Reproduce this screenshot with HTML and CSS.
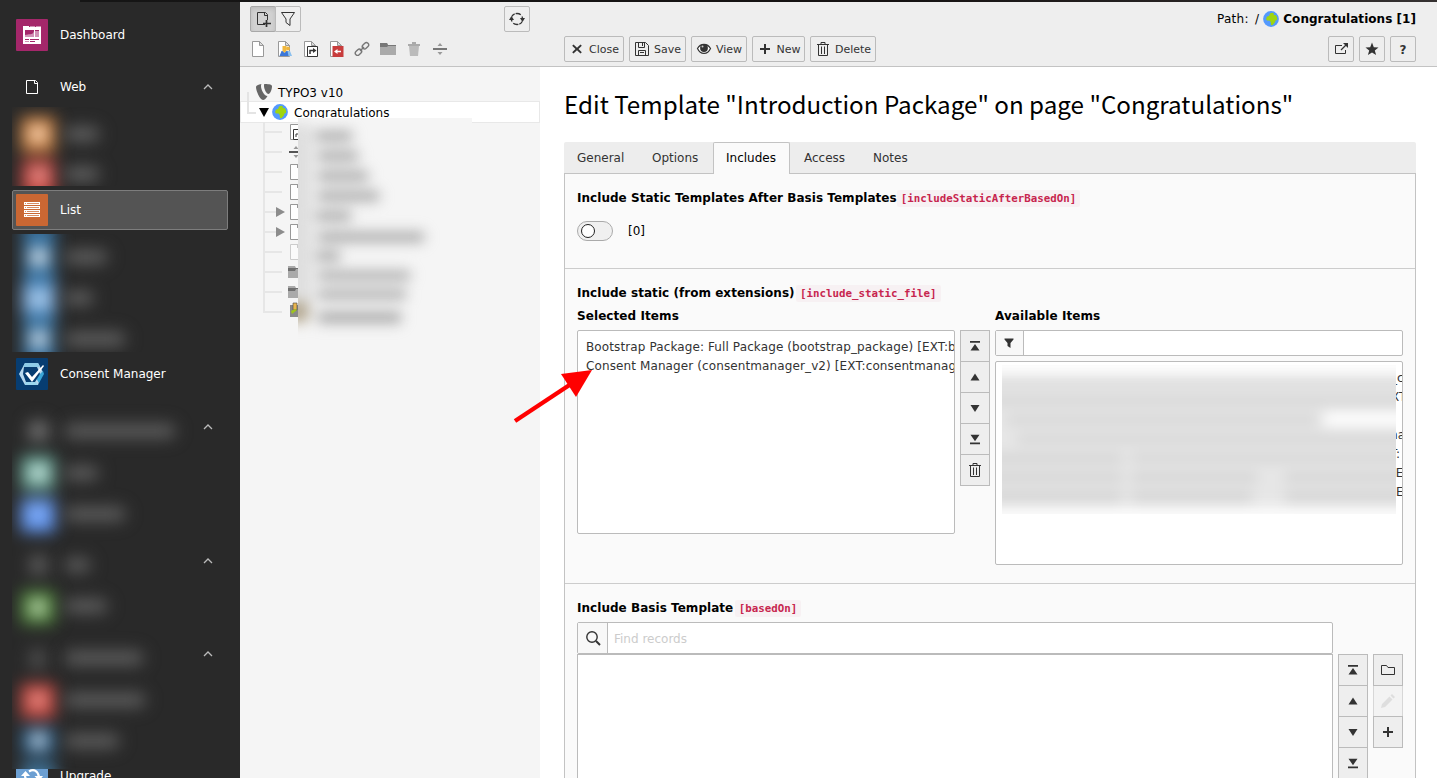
FILE: index.html
```html
<!DOCTYPE html>
<html lang="en">
<head>
<meta charset="utf-8">
<title>Edit Template - TYPO3</title>
<link rel="stylesheet" href="styles.css">
</head>
<body>
<svg class="defs" width="0" height="0">
  <defs>
    <filter id="soft" filterUnits="userSpaceOnUse" x="-40" y="60" width="320" height="760" color-interpolation-filters="sRGB"><feGaussianBlur stdDeviation="7"/></filter>
    <filter id="haze" filterUnits="userSpaceOnUse" x="-60" y="-60" width="560" height="560" color-interpolation-filters="sRGB"><feGaussianBlur stdDeviation="6"/></filter>
    <symbol id="page" viewBox="0 0 16 16"><path d="M2.500.5h7l4 4v11h-11z" fill="#fff" stroke="#999"/><path d="M9.500.5v4h4z" fill="#ddd" stroke="#999"/></symbol>
    <symbol id="globe" viewBox="0 0 16 16"><circle cx="8" cy="8" r="7.900" fill="#5499fd"/><path d="M7 2.500C8.500 1.500 10 1.500 11 2.500l-.5 1.500 2 0c1.500 1.500 2 3 1.500 5l-1.500.5-.7 2-2.300 2.800L8 14l-.3-3-1.200-1.500-2.500 0L3 8l1-2.500 2-.5z" fill="#9fd510"/></symbol>
    <symbol id="bin" viewBox="0 0 16 16"><path d="M3.500 3.500v11h9v-11M2 3.500h12M6 3V1.500h4V3M6.500 5.500V13M9.500 5.500V13" fill="none" stroke="#333"/></symbol>
    <symbol id="first" viewBox="0 0 16 16"><path d="M3 3h10v1.800H3zM8 6l4.500 6.500h-9z" fill="#333"/></symbol>
    <symbol id="up" viewBox="0 0 16 16"><path d="M8 4.500l4.500 7h-9z" fill="#333"/></symbol>
    <symbol id="down" viewBox="0 0 16 16"><path d="M8 12l4.500-7h-9z" fill="#333"/></symbol>
    <symbol id="last" viewBox="0 0 16 16"><path d="M3 11.400h10v1.800H3zM8 10.200L12.500 3.700h-9z" fill="#333"/></symbol>
    <symbol id="plus" viewBox="0 0 16 16"><path d="M7 3h2v4h4v2H9v4H7V9H3V7h4z" fill="#333"/></symbol>
    <symbol id="folder" viewBox="0 0 16 16"><path d="M0 2h7l1 2h8v10H0z" fill="#aaa"/><path d="M0 2h7l1 2h8v1H8L7 6H0z" fill="#777"/></symbol>
    <symbol id="chevron" viewBox="0 0 10 10"><path d="M1 7l4-4 4 4" fill="none" stroke="#bbb" stroke-width="1.300"/></symbol>
  </defs>
</svg>
<div class="topline"></div>
<div class="app">
  <nav class="modules">
    <div class="mod">
      <svg class="mod-icon" viewBox="0 0 32 32"><rect width="32" height="32" rx="1" fill="#a4276a"/><path d="M7 7h6v1h12v17H7z" fill="#fff"/><path d="M14 7h5v1h-5zM20 7h5v1h-5z" fill="#d092b5"/><path d="M9 11h9v7H9z" fill="#d092b5"/><path d="M9 11h9v1c-1 4-4 3-6 3.500L9 16z" fill="#a4276a"/><path d="M19 11h4v7h-4z" fill="#d092b5"/><path d="M19 11h4v1h-4zM9 20h4v1H9zM14 20h9v1h-9zM14 22h5v1h-5z" fill="#a4276a"/><path d="M9 22h4v1H9z" fill="#d092b5"/></svg>
      <span>Dashboard</span>
    </div>
    <div class="mod group">
      <svg class="mod-icon" viewBox="0 0 32 32"><path d="M10.500 9.500h9l2 2v11h-11zM18.500 9.500v3h3" fill="none" stroke="#fff"/></svg>
      <span>Web</span><svg class="chev"><use href="#chevron"/></svg>
    </div>
    <svg class="obscured" width="228" height="79" viewBox="12 107 228 79">
      <g class="soft"><rect x="21" y="117" width="34" height="35" fill="#d6853f"/><rect x="30" y="126" width="16" height="16" fill="#f7dfcb"/><rect x="22" y="160" width="33" height="38" fill="#d04640"/><rect x="31" y="168" width="16" height="15" fill="#e3a09c"/></g>
      <g class="soft" fill="#6c6c6c"><rect x="66" y="128" width="32" height="12"/><rect x="66" y="168" width="32" height="12"/></g>
    </svg>
    <div class="mod active">
      <svg class="mod-icon" viewBox="0 0 32 32"><rect width="32" height="32" rx="1" fill="#ca6733"/><path d="M8 8h16v3H8zM8 12h16v3H8zM8 16h16v3H8zM8 20h16v3H8z" fill="#fff"/><path d="M9 9h1v1H9zM11 9h12v1H11zM9 13h1v1H9zM11 13h12v1H11zM9 17h1v1H9zM11 17h12v1H11zM9 21h1v1H9zM11 21h12v1H11z" fill="#ca6733" opacity=".75"/></svg>
      <span>List</span>
    </div>
    <svg class="obscured" width="228" height="118" viewBox="12 234 228 118">
      <g class="soft"><rect x="23" y="220" width="32" height="152" fill="#37719f"/><rect x="31" y="249" width="16" height="16" fill="#f4f6f8"/><rect x="22" y="284" width="34" height="29" fill="#75a8dc"/><rect x="31" y="292" width="16" height="14" fill="#b9d6ef"/><rect x="31" y="331" width="16" height="16" fill="#e6ecf2"/></g>
      <g class="soft" fill="#6a6a6a"><rect x="66" y="251" width="40" height="12"/><rect x="66" y="292" width="26" height="12"/><rect x="66" y="333" width="58" height="12"/></g>
    </svg>
    <div class="mod consent">
      <svg class="mod-icon" viewBox="0 0 32 32"><rect width="32" height="32" rx="1" fill="#073d71"/><path d="M9 5h13l5 9-5 13H9L3 16z" fill="#b9d9ee"/><path d="M9 5h13l2 4H7z" fill="#8dcbe7"/><path d="M27 13l1 3-5 9-3-5z" fill="#3aa5d7"/><path d="M8 9h13l3 7-5 8h-9l-3-8z" fill="#073d71"/><path d="M9 24h11l2 3H9z" fill="#9bd6ee"/><path d="M9 15l3-1 4 5L27 7l1 1-12 16z" fill="#fff"/></svg>
      <span>Consent Manager</span>
    </div>
    <div class="obscured-group">
      <svg class="obscured" width="228" height="375" viewBox="12 394 228 375">
        <g class="soft"><rect x="29" y="422" width="19" height="18" fill="#777"/><rect x="21" y="456" width="34" height="34" fill="#63a393"/><rect x="30" y="465" width="17" height="16" fill="#d5eae6"/><rect x="21" y="499" width="34" height="33" fill="#6199f8"/><rect x="30" y="506" width="15" height="15" fill="#8cb2f5"/><rect x="30" y="556" width="17" height="18" fill="#606060"/><rect x="21" y="591" width="34" height="33" fill="#4f883a"/><rect x="31" y="600" width="14" height="15" fill="#d5e0cc"/><rect x="30" y="650" width="15" height="18" fill="#545454"/><rect x="21" y="684" width="34" height="34" fill="#d04a42"/><rect x="31" y="693" width="14" height="14" fill="#e6a39d"/><rect x="22" y="727" width="33" height="28" fill="#275e8b"/><rect x="31" y="733" width="15" height="15" fill="#d5dee6"/><rect x="22" y="763" width="33" height="30" fill="#41789f"/></g>
        <g class="soft" fill="#686868"><rect x="66" y="425" width="108" height="12"/><rect x="66" y="467" width="31" height="12"/><rect x="66" y="508" width="58" height="12"/><rect x="66" y="559" width="23" height="12"/><rect x="66" y="600" width="40" height="12"/><rect x="66" y="652" width="76" height="12"/><rect x="66" y="694" width="78" height="12"/><rect x="66" y="735" width="52" height="12"/></g>
      </svg>
      <div class="chevs"><svg class="chev"><use href="#chevron"/></svg><svg class="chev"><use href="#chevron"/></svg><svg class="chev"><use href="#chevron"/></svg></div>
    </div>
    <div class="mod upgrade">
      <svg class="mod-icon" viewBox="0 13 32 32"><rect y="13" width="32" height="32" fill="#6c9fd2"/><path d="M13 15.500c5-3 9-.5 10 5.500M9 19c0 6 5 9 10 7" fill="none" stroke="#fff" stroke-width="2.200"/><path d="M9.500 15l4.500 5H5zM23 25l-4.500-5H27z" fill="#fff"/></svg>
      <span>Upgrade</span>
    </div>
  </nav>

  <aside class="tree-pane">
    <div class="tree-head">
      <div class="tree-tools">
        <div class="seg"><button class="btn sq on"><svg viewBox="0 0 16 16"><path d="M10 13.500H2.500v-12h8l2 2V9M9.500 1.500v3h3" fill="none" stroke="#333"/><path d="M11.500 9v7M8 12.500h8" stroke="#333" stroke-width="1.700"/></svg></button><button class="btn sq"><svg viewBox="0 0 16 16"><path d="M1.500 1.500h13L10 8v6.500l-4-3V8z" fill="none" stroke="#333"/></svg></button></div>
        <button class="btn sq"><svg viewBox="0 0 16 16"><path d="M3 10.500C1 6 4 2.500 8 2.500M13 5.500c2 4.500-1 8-5 8M8 2.500c2 0 3.500.8 4.500 2M8 13.500c-2 0-3.500-.8-4.500-2" fill="none" stroke="#333" stroke-width="1.300" stroke-dasharray="4 1"/><path d="M2.500 5L5 9H0zM13.500 11L16 7h-5z" fill="#333"/></svg></button>
      </div>
      <div class="newicons">
        <svg><use href="#page"/></svg>
        <svg viewBox="0 0 16 16"><use href="#page"/><circle cx="12" cy="7.500" r="2" fill="#edb43d"/><path d="M9 15l1-5h4l2 5z" fill="#8bc0ee"/><path d="M6.500 5h4v5l-2 2-2-2z" fill="#f0b83f"/><path d="M3.500 15l2-5h1l2 2 2-2h1l1 5z" fill="#3c78d8"/></svg>
        <svg viewBox="0 0 16 16"><use href="#page"/><path d="M5.500 5.500h10v10h-10z" fill="#fff" stroke="#333"/><path d="M8 13v-3.500h3.500" fill="none" stroke="#333" stroke-width="1.500"/><path d="M11 7l3.500 2.500L11 12z" fill="#333"/></svg>
        <svg viewBox="0 0 16 16"><use href="#page"/><path d="M4.500 5h11v11h-11z" fill="#c83c3c"/><path d="M6 10.500L9.500 8v1.800H13v1.500H9.500V13z" fill="#fff"/></svg>
        <svg viewBox="0 0 16 16"><g fill="none" stroke="#777" stroke-width="1.400"><rect x="8" y="2.500" width="7" height="4.500" rx="2.200" transform="rotate(-45 11.500 4.800)"/><rect x="1" y="9" width="7" height="4.500" rx="2.200" transform="rotate(-45 4.500 11.300)"/><path d="M6 10l4-4"/></g></svg>
        <svg><use href="#folder"/></svg>
        <svg viewBox="0 0 16 16"><path d="M3 5h10l-1 10H4z" fill="#bbb"/><path d="M2 3h12v2H2zM6 1h4v2H6z" fill="#aaa"/></svg>
        <svg viewBox="0 0 16 16"><path d="M1 7h14v2H1z" fill="#777"/><path d="M8 2l2.500 3h-5zM8 14l2.500-3h-5z" fill="#999"/></svg>
      </div>
    </div>
    <div class="tree">
      <div class="node"><svg class="root-rail" width="16" height="20"><path d="M8 10v10" stroke="#e4e4e4" stroke-width="2"/></svg><svg class="ic" viewBox="0 0 16 16"><path d="M5.500 0C2 .5 0 1.500 0 3c0 4 4 13 7 13 1.500 0 3-1.500 4.500-4C8 12 5 5.500 5 2c0-1 .2-1.500.5-2zM8.500 0C11 0 16 .3 16 2c0 4-2 8-3.500 8C10.500 10 8 5 8 2c0-1.300 0-1.800.5-2z" fill="#666"/></svg><span>TYPO3 v10</span></div>
      <div class="node current"><svg class="rail" width="32" height="20"><path d="M8 0v11h8" fill="none" stroke="#e4e4e4" stroke-width="2"/><path d="M19 6h10l-5 9z"/></svg><svg class="ic"><use href="#globe"/></svg><span>Congratulations</span></div>
      <div class="children">
        <div class="kids">
          <svg width="58" height="20"><path d="M24 0v20M24 10h18" class="rl"/><path d="M50.500 2.500h9v15h-9z" fill="#fff" stroke="#999"/><path d="M53.500 7.500h8v10h-8zM56 15v-3h4" fill="#fff" stroke="#333"/></svg>
          <svg width="58" height="20"><path d="M24 0v20M24 10h18" class="rl"/><path d="M49 9h14v2H49z" fill="#555"/><path d="M56 4l2.500 3h-5zM56 16l2.500-3h-5z" fill="#999"/></svg>
          <svg width="58" height="20"><path d="M24 0v20M24 10h18" class="rl"/><path d="M58 17.500h-7.500v-15H58M57.500 2v4" fill="#fff" stroke="#999"/></svg>
          <svg width="58" height="20"><path d="M24 0v20M24 10h18" class="rl"/><path d="M58 17.500h-7.500v-15H58M57.500 2v4" fill="#fff" stroke="#999"/></svg>
          <svg width="58" height="20"><path d="M24 0v20M24 10h18" class="rl"/><path d="M36 5l9 5-9 5z" fill="#8c8c8c"/><path d="M58 17.500h-7.500v-15H58M57.500 2v4" fill="#fff" stroke="#999"/></svg>
          <svg width="58" height="20"><path d="M24 0v20M24 10h18" class="rl"/><path d="M36 5l9 5-9 5z" fill="#8c8c8c"/><path d="M58 17.500h-7.500v-15H58M57.500 2v4" fill="#fff" stroke="#999"/></svg>
          <svg width="58" height="20"><path d="M24 0v20M24 10h18" class="rl"/><path d="M58 17.500h-7.500v-15H58M57.500 2v4" fill="#fafafa" stroke="#ccc"/></svg>
          <svg width="58" height="20"><path d="M24 0v20M24 10h18" class="rl"/><path d="M48 4h7l1 2h2v10H48z" fill="#aaa"/><path d="M48 6h10v1h-2l-1 2h-7z" fill="#707070"/></svg>
          <svg width="58" height="20"><path d="M24 0v20M24 10h18" class="rl"/><path d="M48 4h7l1 2h2v10H48z" fill="#aaa"/><path d="M48 6h10v1h-2l-1 2h-7z" fill="#707070"/></svg>
          <svg width="58" height="20"><path d="M24 0v10h18" class="rl" fill="none"/><path d="M50 3h8v12h-8z" fill="#8a8a8a"/><path d="M53 1h4v7h-4z" fill="#e9b54d" stroke="#444" stroke-width=".6"/><path d="M51 9l4-2 2 1-5 4z" fill="#9fc51a"/></svg>
        </div>
        <svg class="tree-haze" width="174" height="237" viewBox="0 0 174 237">
          <rect width="174" height="237" fill="#f5f5f5"/>
          <g class="haze"><rect x="-20" y="6" width="34" height="192" fill="#dedede"/><rect x="-12" y="184" width="22" height="20" fill="#b3a78f"/>
          <g fill="#a6a6a6"><rect x="18" y="13" width="36" height="10"/><rect x="20" y="33" width="40" height="10"/><rect x="20" y="53" width="50" height="10"/><rect x="20" y="73" width="61" height="10"/><rect x="18" y="93" width="35" height="10"/><rect x="20" y="114" width="106" height="10"/><rect x="18" y="133" width="24" height="10"/><rect x="20" y="153" width="92" height="9"/><rect x="20" y="172" width="88" height="9"/><rect x="20" y="194" width="83" height="11"/></g></g>
        </svg>
      </div>
    </div>
  </aside>

  <main class="content">
    <header class="dochead">
      <div class="path"><span class="crumb">Path: /</span><svg class="ic"><use href="#globe"/></svg><b>Congratulations [1]</b></div>
      <div class="toolbar">
        <button class="btn w60"><svg viewBox="0 0 16 16"><path d="M4.500 3.500L8 6.700l3.500-3.200 1.300 1.300L9.500 8l3.300 3.200-1.300 1.300L8 9.300l-3.500 3.200-1.300-1.300L6.500 8 3.200 4.800z" fill="#333"/></svg>Close</button>
        <button class="btn w57"><svg viewBox="0 0 16 16"><path d="M1.500 1.500h10l3 3v10h-13zM4.500 1.500v5h6v-5M4.500 14.500v-5h7v5" fill="none" stroke="#333"/><path d="M6 11.500h4M8.500 2v3" stroke="#333"/></svg>Save</button>
        <button class="btn w56"><svg viewBox="0 0 16 16"><path d="M1.500 7.500c3-5.500 10-5.500 13 0-3 6.500-10 6.500-13 0z" fill="#fff" stroke="#333" stroke-width="1.200"/><circle cx="8" cy="7" r="3.900" fill="#333"/><circle cx="6.500" cy="5.500" r="1" fill="#ccc"/></svg>View</button>
        <button class="btn w53"><svg><use href="#plus"/></svg>New</button>
        <button class="btn w66"><svg><use href="#bin"/></svg>Delete</button>
        <span class="grow"></span>
        <button class="btn sq"><svg viewBox="0 0 16 16"><path d="M9 4.500H2.500v8h10V9" fill="none" stroke="#333"/><path d="M8 9l5-5" stroke="#333" stroke-width="1.300"/><path d="M10 2h5v5z" fill="#333"/></svg></button>
        <button class="btn sq"><svg viewBox="0 0 16 16"><path d="M8 1.500l1.800 4.700 4.700.2-3.700 3 1.300 4.600L8 11.400 3.900 14l1.300-4.600-3.700-3 4.700-.2z" fill="#333"/></svg></button>
        <button class="btn sq q">?</button>
      </div>
    </header>
    <div class="body">
      <h1>Edit Template "Introduction Package" on page "Congratulations"</h1>
      <div class="tabs"><span class="tab t1">General</span><span class="tab t2">Options</span><span class="tab sel">Includes</span><span class="tab t4">Access</span><span class="tab t5">Notes</span></div>
      <div class="panel">
        <section class="s1">
          <div class="label">Include Static Templates After Basis Templates<code>[includeStaticAfterBasedOn]</code></div>
          <div class="switch-row"><span class="switch"><i></i></span><span>[0]</span></div>
        </section>
        <section class="s2">
          <div class="label">Include static (from extensions)<code>[include_static_file]</code></div>
          <div class="pick">
            <div class="selected">
              <div class="sub">Selected Items</div>
              <div class="list"><div>Bootstrap Package: Full Package (bootstrap_package) [EXT:b</div><div>Consent Manager (consentmanager_v2) [EXT:consentmanag</div></div>
            </div>
            <div class="vbtns">
              <button class="btn"><svg><use href="#first"/></svg></button><button class="btn"><svg><use href="#up"/></svg></button><button class="btn"><svg><use href="#down"/></svg></button><button class="btn"><svg><use href="#last"/></svg></button><button class="btn"><svg><use href="#bin"/></svg></button>
            </div>
            <div class="available">
              <div class="sub">Available Items</div>
              <div class="filter"><span class="addon"><svg viewBox="0 0 16 16"><path d="M3.500 3.500h9v1L9.500 8v5l-3-2V8l-3-3.500z" fill="#333"/></svg></span><span class="field"></span></div>
              <div class="list avail">
                <svg class="avail-haze" width="394" height="149" viewBox="0 0 394 149">
                  <rect width="394" height="149" fill="#fdfdfd"/>
                  <g class="haze"><rect x="-30" y="12" width="460" height="130" fill="#e6e6e6"/><rect x="322" y="47" width="110" height="14" fill="#fff"/><g fill="#cdcdcd"><rect x="-10" y="14" width="440" height="5"/><rect x="-10" y="33" width="440" height="6"/><rect x="5" y="52" width="310" height="6"/><rect x="15" y="71" width="410" height="6"/><rect x="-10" y="90" width="130" height="7"/><rect x="130" y="90" width="300" height="6"/><rect x="-10" y="109" width="130" height="7"/><rect x="130" y="109" width="125" height="7"/><rect x="283" y="109" width="150" height="7"/><rect x="-10" y="128" width="130" height="8"/><rect x="130" y="128" width="120" height="8"/><rect x="283" y="128" width="150" height="8"/></g></g>
                </svg>
                <div class="tails"><span class="c1">_c</span><span class="c2">XT</span><span></span><span class="c3">ma</span><span class="c4">T:</span><span class="c5">[E</span><span>E</span></div>
              </div>
            </div>
          </div>
        </section>
        <section class="s3">
          <div class="label">Include Basis Template<code>[basedOn]</code></div>
          <div class="search"><span class="addon"><svg viewBox="0 0 16 16"><circle cx="7" cy="7" r="5.200" fill="none" stroke="#333" stroke-width="1.400"/><path d="M11 11l4 4" stroke="#333" stroke-width="2"/></svg></span><span class="field">Find records</span></div>
          <div class="records">
            <div class="list big"></div>
            <div class="vbtns"><button class="btn"><svg><use href="#first"/></svg></button><button class="btn"><svg><use href="#up"/></svg></button><button class="btn"><svg><use href="#down"/></svg></button><button class="btn"><svg><use href="#last"/></svg></button></div>
            <div class="vbtns"><button class="btn"><svg viewBox="0 0 16 16"><path d="M1.500 3.500h5l1.500 2h6.500v7h-13z" fill="none" stroke="#333"/></svg></button><button class="btn off"><svg viewBox="0 0 16 16"><path d="M1 15l1-4 7.500-7.500 3 3L5 14zM10.500 2.500l1.500-1.500 3 3-1.500 1.500z" fill="#333"/></svg></button><button class="btn"><svg><use href="#plus"/></svg></button></div>
          </div>
        </section>
      </div>
    </div>
  </main>
</div>
<svg class="arrow" width="80" height="56" viewBox="0 0 80 56"><path d="M2 52L58 15" stroke="#f00" stroke-width="4.400"/><path d="M79 1L48 5 63 28z" fill="#f00"/></svg>
</body>
</html>
```
FILE: styles.css
```css
* { box-sizing: border-box; }
html, body { height: 778px; overflow: hidden; }
body { margin: 0; font: 12px/18px "DejaVu Sans", Verdana, sans-serif; color: #000; background: #fff; }
svg { display: block; flex: none; }
.defs { position: absolute; }
.soft { filter: url(#soft) blur(5px); }
.haze { filter: url(#haze) blur(3px); }
.topline { position: absolute; left: 80px; right: 0; top: 0; height: 2px; background: linear-gradient(90deg, #151515, #151212 60%, #353131); }
.app { display: flex; height: 778px; }

.modules { width: 240px; flex: none; background: #292929; color: #fff; padding-top: 15px; display: flex; flex-direction: column; overflow: hidden; }
.mod { height: 40px; flex: none; margin: 0 12px; padding: 0 14px 0 3px; border: 1px solid transparent; border-radius: 2px; display: flex; align-items: center; gap: 12px; }
.mod span { flex: 1; }
.mod-icon { width: 32px; height: 32px; }
.group { margin-top: 12px; }
.active { background: #545454; border-color: #7d7d7d; margin-top: 4px; margin-bottom: 4px; }
.consent { margin-top: 2px; }
.chev { width: 10px; height: 10px; }
.obscured { margin-left: 12px; overflow: hidden; }
.obscured-group { display: grid; flex: none; }
.obscured-group > * { grid-area: 1 / 1; }
.chevs { justify-self: end; padding: 28px 27px 0 0; display: grid; grid-template-rows: 134px 93px 10px; }
.upgrade { height: 9px; border: 0; padding-left: 4px; align-items: flex-start; overflow: hidden; }
.upgrade span { margin-top: -2px; }

.btn { height: 26px; padding: 0; border: 1px solid #bbb; border-radius: 2px; background: #eee; font: inherit; font-size: 11px; color: #333; display: flex; align-items: center; justify-content: center; gap: 4px; }
.btn svg { width: 16px; height: 16px; }
.sq { width: 26px; }
.tree-pane { width: 300px; flex: none; background: #f5f5f5; padding-top: 2px; }
.tree-head, .dochead { background: #eee; border-bottom: 1px solid #c3c3c3; height: 65px; }
.tree-head { padding: 4px 10px 0; }
.tree-tools { display: flex; justify-content: space-between; }
.seg { display: flex; }
.seg .btn + .btn { margin-left: -1px; border-radius: 0 2px 2px 0; }
.seg .on { background: #d2d2d2; border-color: #a8a8a8; box-shadow: inset 0 2px 4px #bbb; }
.newicons { display: flex; gap: 10px; padding-top: 9px; }
.newicons svg { width: 16px; height: 16px; }
.tree { padding-top: 15px; }
.node { height: 20px; display: flex; align-items: center; }
.node span { margin: 2px 0 0 6px; }
.ic { width: 16px; height: 16px; }
.current { background: #fff; box-shadow: 0 1px #e8e8e8, 0 -1px #e8e8e8, inset 1px 0 #e8e8e8, inset -1px 0 #e8e8e8; }
.rl { stroke: #e6e6e6; stroke-width: 2; }
.children { display: flex; }
.kids { width: 58px; overflow: hidden; }
.tree-haze { margin-top: -4px; overflow: hidden; position: relative; }

.content { width: 897px; padding-top: 2px; }
.dochead { padding: 8px 21px 0 24px; }
.path { display: flex; justify-content: flex-end; align-items: center; height: 18px; }
.path b { letter-spacing: 0.04px; }
.path .ic { margin: 0 4px; }
.crumb { letter-spacing: 0.3px; word-spacing: 2px; }
.toolbar { display: flex; gap: 5px; padding-top: 8px; }
.toolbar .btn { padding-top: 1px; }
.toolbar .btn svg { margin-top: -1px; }
.grow { flex: 1; }
.w60 { width: 60px; } .w57 { width: 57px; } .w56 { width: 56px; } .w53 { width: 53px; } .w66 { width: 66px; }
.q { font-weight: bold; font-size: 12px; }
.body { padding: 0 21px 0 24px; }
h1 { margin: 0; height: 75px; padding-top: 18px; font: 400 24.2px/38px "Noto Sans CJK JP", "Noto Sans", sans-serif; white-space: nowrap; }
.tabs { height: 31px; display: flex; background: #ededed; border-radius: 2px 2px 0 0; color: #333; }
.tab { padding: 7px 0 0 13px; }
.t1 { width: 75px; } .t2 { width: 74px; } .t4 { width: 70px; padding-left: 14px; }
.sel { width: 77px; height: 32px; padding: 6px 0 0 12px; border: 1px solid #c3c3c3; border-bottom: 0; background: #fafafa; color: #000; border-radius: 2px 2px 0 0; position: relative; }
.panel { height: 620px; border: 1px solid #c3c3c3; background: #fafafa; }
section { padding: 15px 12px 0; border-bottom: 1px solid #ccc; }
.s1 { height: 95px; } .s2 { height: 315px; } .s3 { border: 0; }
.label, .sub { font-weight: bold; height: 18px; white-space: nowrap; letter-spacing: 0.04px; }
.sub { letter-spacing: 0.08px; }
code { font: bold 10.8px/14px "DejaVu Sans Mono", monospace; letter-spacing: 0; color: #c7254e; background: #f7f1f3; padding: 2px 4px; border-radius: 2px; }
.s2 code, .s3 code { margin-left: 1.5px; }
.switch-row { display: flex; gap: 15px; padding-top: 14px; line-height: 20px; }
.switch { width: 36px; height: 20px; border: 1px solid #aaa; border-radius: 10px; background: #f0f0f0; padding: 2px 3px; }
.switch i { display: block; width: 14px; height: 14px; border: 1px solid #222; border-radius: 50%; background: #fff; }
.pick { display: flex; gap: 5px; padding-top: 5px; }
.sub { height: 23px; }
.selected { width: 378px; }
.available { width: 408px; }
.list { height: 204px; border: 1px solid #bbb; border-radius: 2px; background: #fff; padding: 7px 0 0 8px; line-height: 19px; white-space: nowrap; overflow: hidden; color: #333; letter-spacing: 0.11px; }
.vbtns { width: 30px; padding-top: 23px; }
.vbtns .btn { width: 30px; height: 32px; border-radius: 0; margin-bottom: -1px; }
.off { opacity: .55; }
.off svg { opacity: .2; }
.filter, .search { display: flex; height: 26px; border: 1px solid #bbb; border-radius: 2px; background: #fff; }
.addon { width: 28px; border-right: 1px solid #bbb; background: #f8f8f8; display: flex; align-items: center; justify-content: center; }
.addon svg { width: 16px; height: 16px; }
.filter .addon svg { margin-right: 1px; }
.avail { margin-top: 5px; padding: 3px 0 0 6px; display: flex; }
.avail-haze { overflow: hidden; }
.tails { width: 6px; margin-top: 4px; overflow: hidden; }
.tails span { display: block; height: 19px; }
.c1 { text-indent: -5px; } .c2 { text-indent: -5px; } .c3 { text-indent: -10px; } .c4 { text-indent: -6px; } .c5 { text-indent: -5px; }
.search { width: 756px; height: 32px; margin-top: 5px; }
.search .addon { width: 30px; }
.search .field { padding: 7px 6px; color: #ccc; }
.records { display: flex; gap: 5px; height: 130px; }
.records .vbtns { padding: 0; }
.big { width: 756px; height: 160px; border-radius: 0; }
.arrow { position: absolute; left: 513px; top: 369px; }
```
